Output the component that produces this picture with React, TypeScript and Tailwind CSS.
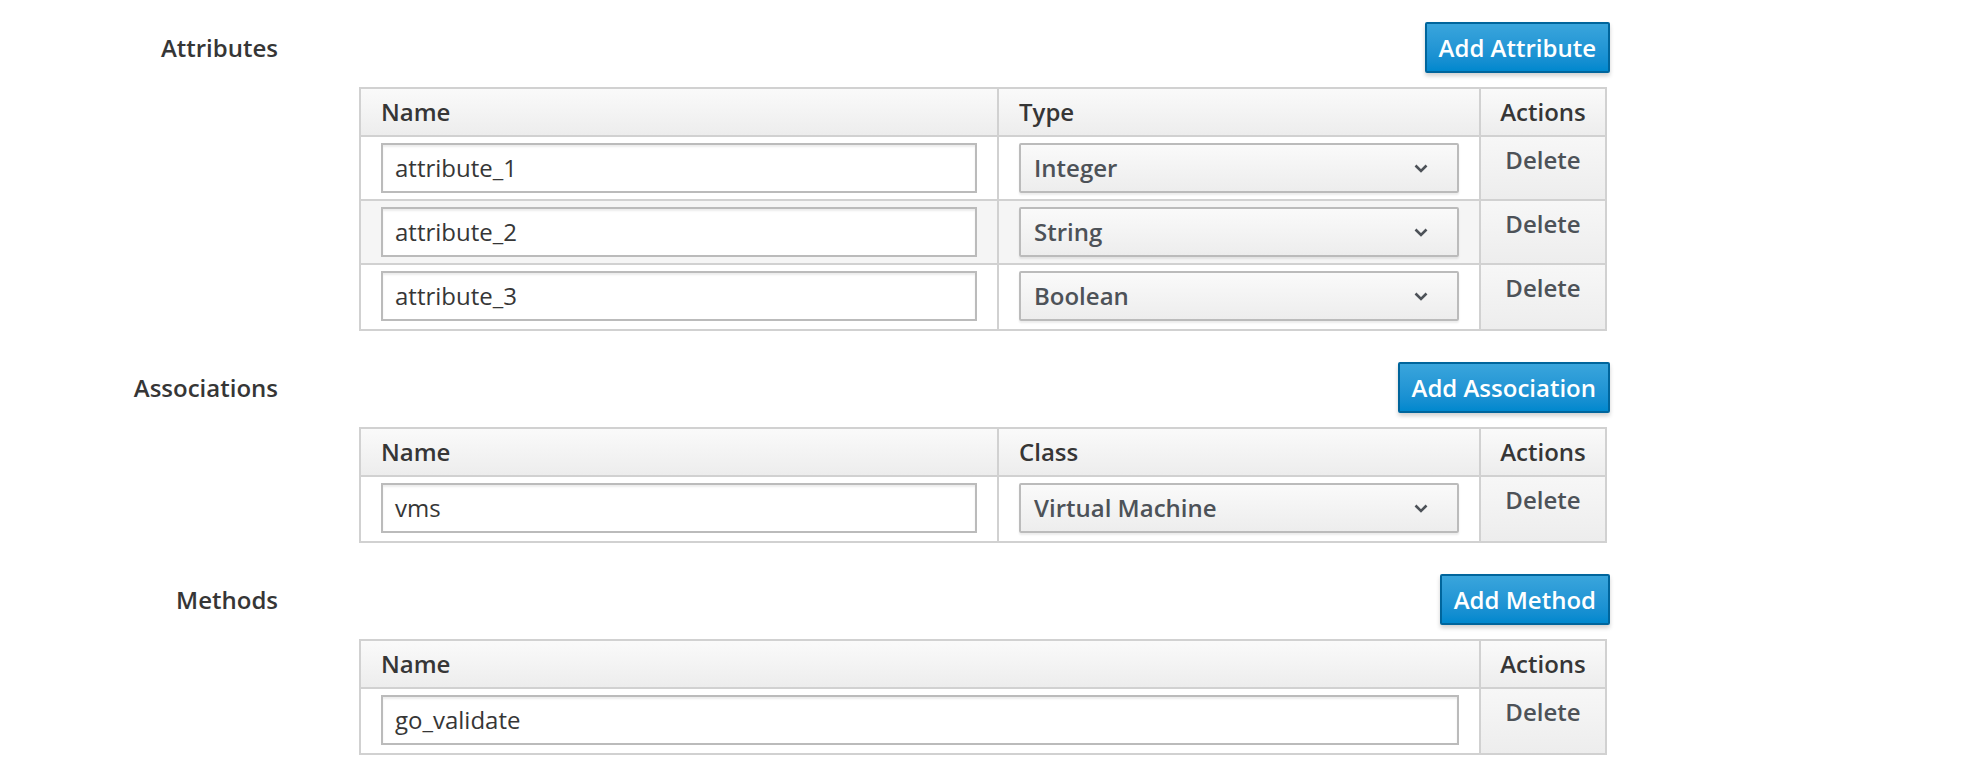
import React from 'react';

const attributes = [
  { name: 'attribute_1', type: 'Integer' },
  { name: 'attribute_2', type: 'String' },
  { name: 'attribute_3', type: 'Boolean' },
];

const associations = [{ name: 'vms', cls: 'Virtual Machine' }];

const methods = [{ name: 'go_validate' }];

function Chevron() {
  return (
    <svg width="14" height="9" viewBox="0 0 14 9" className="shrink-0">
      <polyline points="1.5,1.5 7,7 12.5,1.5" fill="none" stroke="#4d5258" strokeWidth="2.6" />
    </svg>
  );
}

function TextInput({ value }: { value: string }) {
  return (
    <div className="h-[50px] w-full flex items-center pl-[12px] bg-white border-2 border-[#bbbbbb] shadow-[inset_0_2px_2px_rgba(3,3,3,0.075)] text-[24px] text-[#363636]">
      {value}
    </div>
  );
}

function SelectBox({ value }: { value: string }) {
  return (
    <div className="h-[50px] w-full flex items-center justify-between pl-[13px] pr-[29px] bg-gradient-to-b from-[#fafafa] to-[#ededed] border-2 border-[#bbbbbb] rounded-[2px] shadow-[0_2px_2px_rgba(3,3,3,0.08)] text-[24px] font-semibold text-[#4d5258]">
      <span>{value}</span>
      <Chevron />
    </div>
  );
}

function Section({
  label,
  button,
  children,
  className = '',
}: {
  label: string;
  button: string;
  children: React.ReactNode;
  className?: string;
}) {
  return (
    <div className={`flex ${className}`}>
      <div className="w-[278px] h-[51px] flex items-center justify-end text-[24px] font-semibold text-[#363636]">
        {label}
      </div>
      <div className="ml-[81px] w-[1248px]">
        <div className="flex justify-end">
          <button className="-mr-[3px] h-[51px] px-[12px] border-2 border-[#00659c] rounded-[2px] bg-gradient-to-b from-[#39a5dc] to-[#0088ce] text-white text-[24px] font-semibold shadow-[0_3px_4px_rgba(0,0,0,0.18)]">
            {button}
          </button>
        </div>
        <div className="mt-[14px] border-2 border-[#d1d1d1] divide-y-2 divide-[#d1d1d1]">{children}</div>
      </div>
    </div>
  );
}

function HeadRow({ cols, mid }: { cols: string; mid?: string }) {
  return (
    <div className={`grid ${cols} h-[48px] bg-gradient-to-b from-[#fafafa] to-[#ededed] text-[24px] font-semibold text-[#363636]`}>
      <div className="flex items-center px-[20px]">Name</div>
      {mid && <div className="flex items-center px-[20px] border-l-2 border-[#d1d1d1]">{mid}</div>}
      <div className="flex items-center justify-center border-l-2 border-[#d1d1d1]">Actions</div>
    </div>
  );
}

function ActionsCell() {
  return (
    <div className="pt-[6px] text-center border-l-2 border-[#d1d1d1] bg-gradient-to-b from-[#f7f7f7] to-[#ededed] text-[24px] leading-[34px] font-semibold text-[#4d5258]">
      Delete
    </div>
  );
}

export default function App() {
  const three = 'grid-cols-[636px_482px_126px]';
  const two = 'grid-cols-[1118px_126px]';
  return (
    <div className="min-h-screen bg-white pt-[22px] font-['Open_Sans',sans-serif]">
      <Section label="Attributes" button="Add Attribute">
        <HeadRow cols={three} mid="Type" />
        {attributes.map((a, i) => (
          <div key={a.name} className={`grid ${three} h-[64px] ${i === 1 ? 'bg-[#f5f5f5]' : 'bg-white'}`}>
            <div className="pt-[6px] px-[20px]">
              <TextInput value={a.name} />
            </div>
            <div className="pt-[6px] px-[20px] border-l-2 border-[#d1d1d1]">
              <SelectBox value={a.type} />
            </div>
            <ActionsCell />
          </div>
        ))}
      </Section>

      <Section label="Associations" button="Add Association" className="mt-[31px]">
        <HeadRow cols={three} mid="Class" />
        {associations.map((a) => (
          <div key={a.name} className={`grid ${three} h-[64px] bg-white`}>
            <div className="pt-[6px] px-[20px]">
              <TextInput value={a.name} />
            </div>
            <div className="pt-[6px] px-[20px] border-l-2 border-[#d1d1d1]">
              <SelectBox value={a.cls} />
            </div>
            <ActionsCell />
          </div>
        ))}
      </Section>

      <Section label="Methods" button="Add Method" className="mt-[31px]">
        <HeadRow cols={two} />
        {methods.map((m) => (
          <div key={m.name} className={`grid ${two} h-[64px] bg-white`}>
            <div className="pt-[6px] px-[20px]">
              <TextInput value={m.name} />
            </div>
            <ActionsCell />
          </div>
        ))}
      </Section>
    </div>
  );
}
